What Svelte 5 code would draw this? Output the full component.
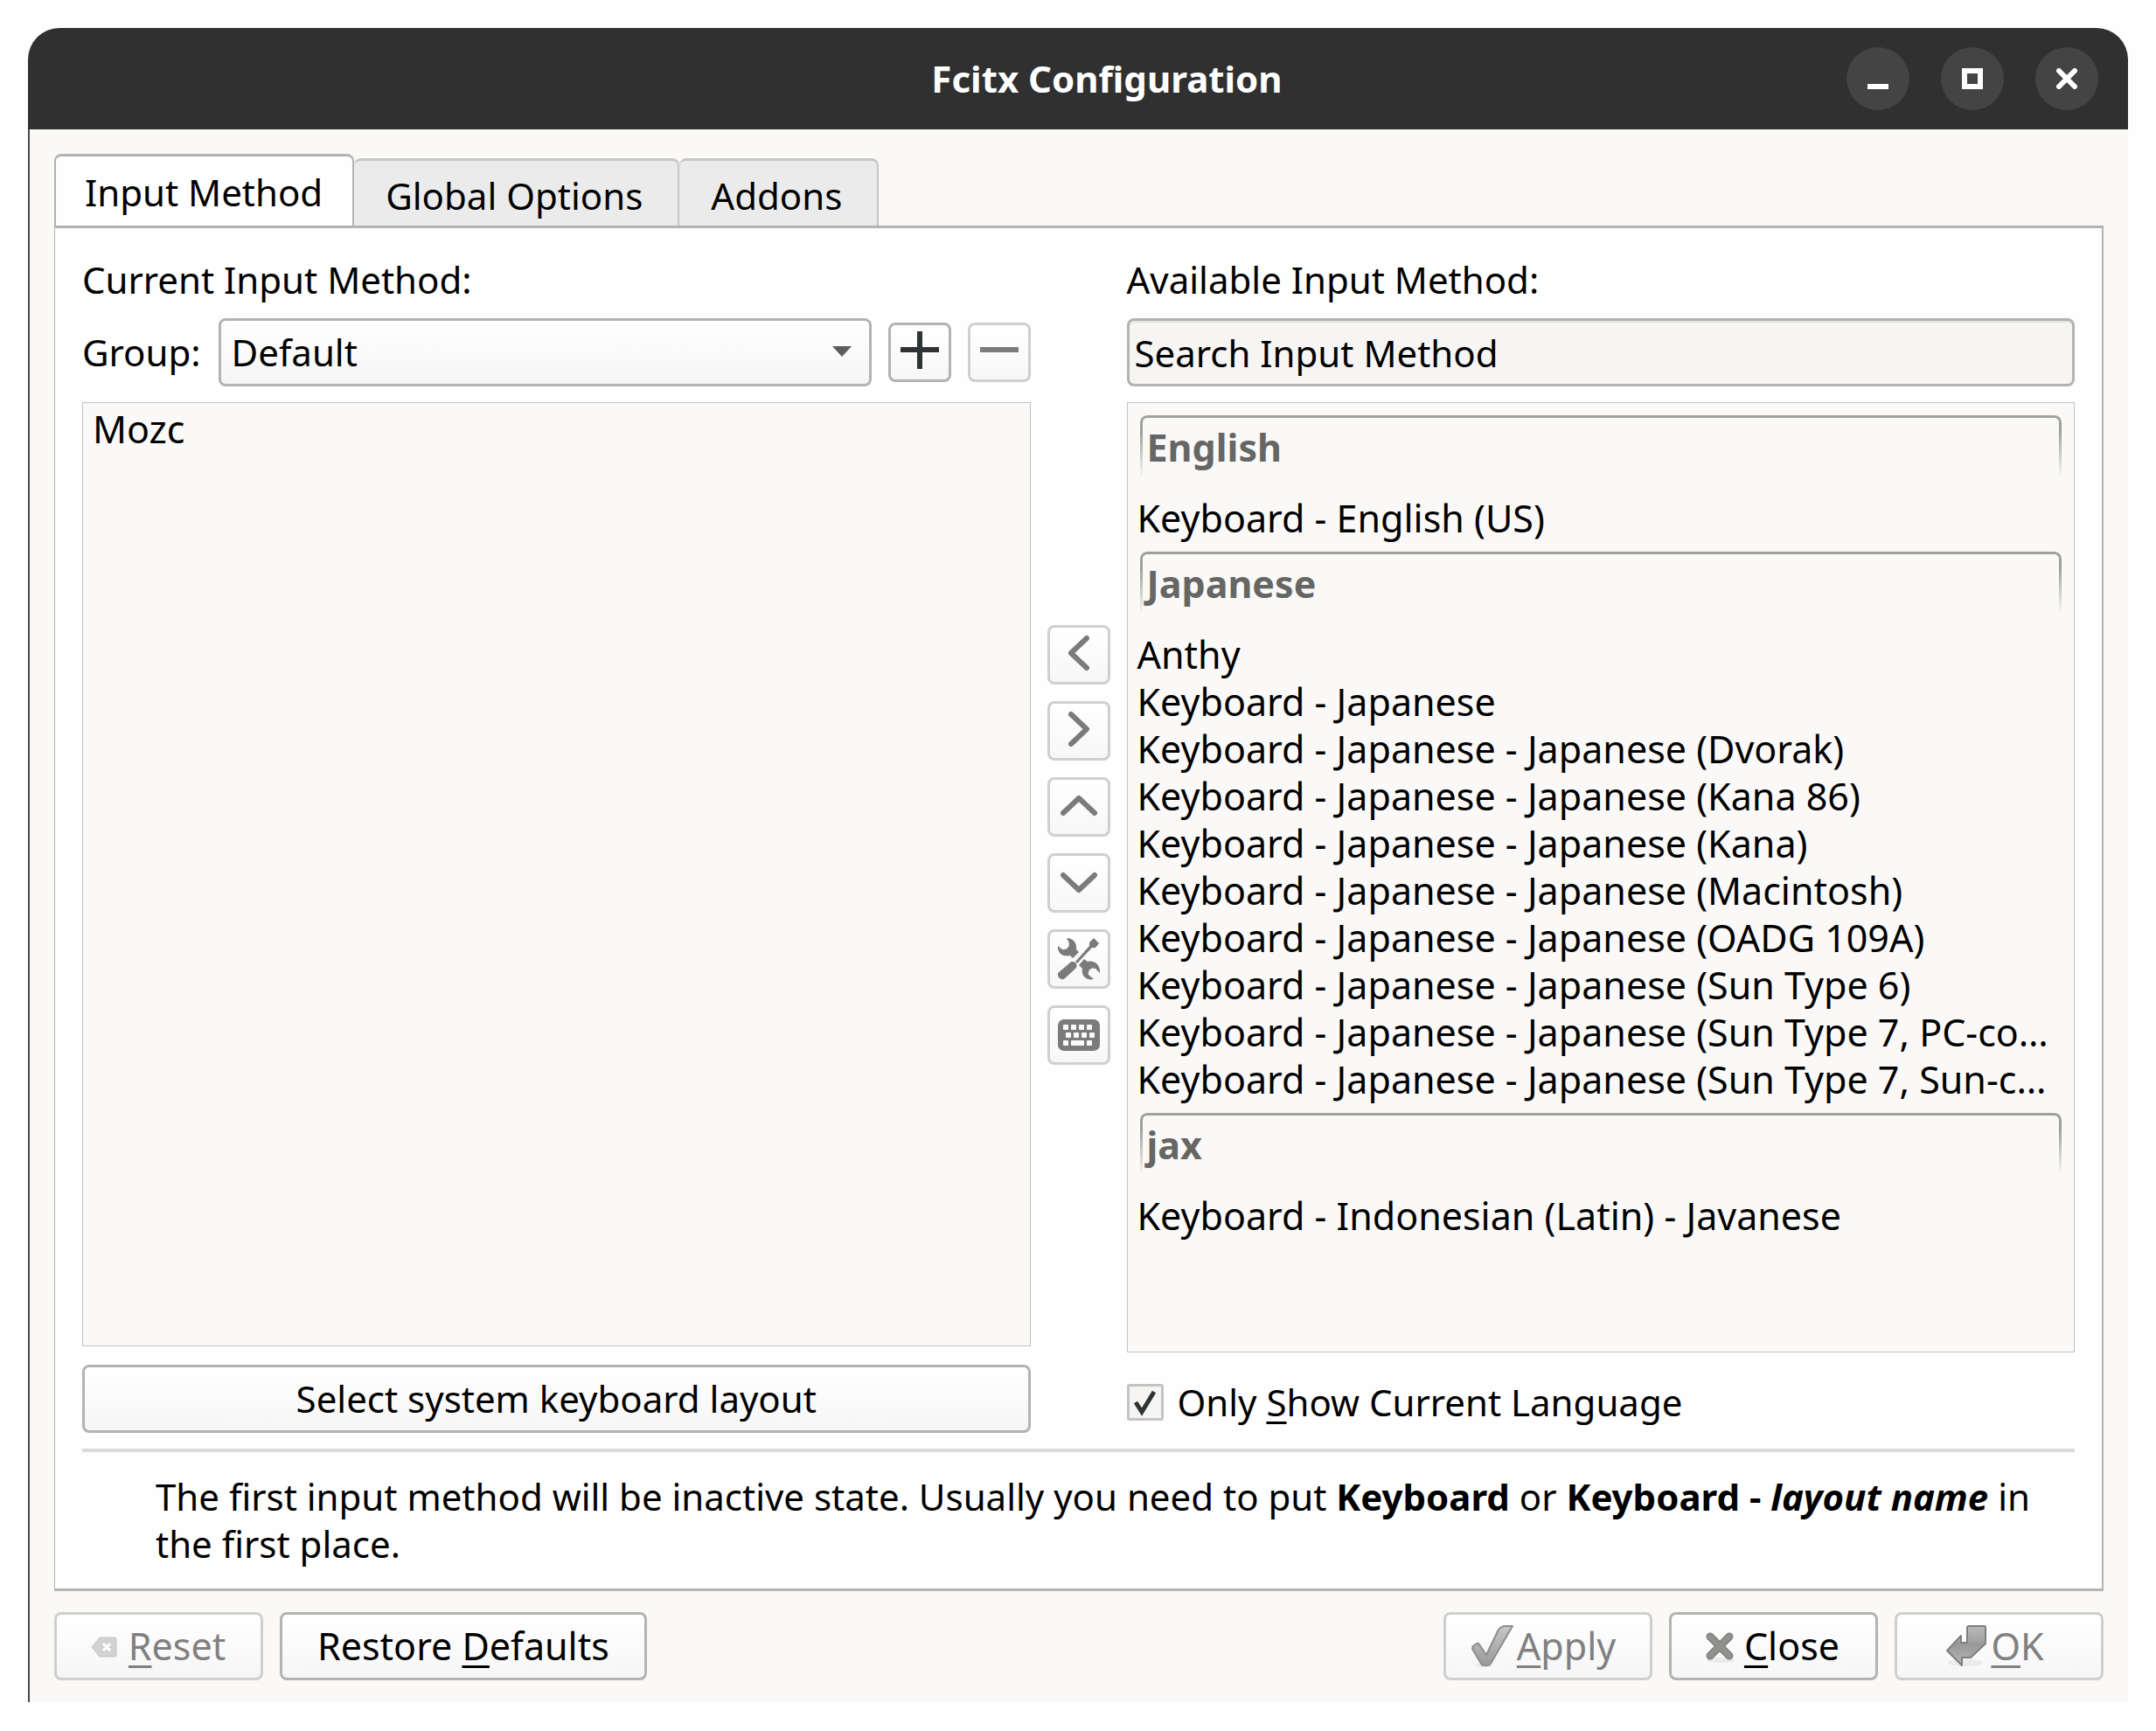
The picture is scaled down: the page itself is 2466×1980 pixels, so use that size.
<script lang="ts">
	const tabs = ['Input Method', 'Global Options', 'Addons'];
	const groups = ['Default'];
	const current = ['Mozc'];

	const available = [
		{ language: 'English', items: ['Keyboard - English (US)'] },
		{
			language: 'Japanese',
			items: [
				'Anthy',
				'Keyboard - Japanese',
				'Keyboard - Japanese - Japanese (Dvorak)',
				'Keyboard - Japanese - Japanese (Kana 86)',
				'Keyboard - Japanese - Japanese (Kana)',
				'Keyboard - Japanese - Japanese (Macintosh)',
				'Keyboard - Japanese - Japanese (OADG 109A)',
				'Keyboard - Japanese - Japanese (Sun Type 6)',
				'Keyboard - Japanese - Japanese (Sun Type 7, PC-co…',
				'Keyboard - Japanese - Japanese (Sun Type 7, Sun-c…'
			]
		},
		{ language: 'jax', items: ['Keyboard - Indonesian (Latin) - Javanese'] }
	];

	const arrows = [
		{ label: 'Remove input method', d: 'M33 5 L15 22 L33 39' },
		{ label: 'Add input method', d: 'M15 5 L33 22 L15 39' },
		{ label: 'Move up', d: 'M6 31 L24 14 L42 31' },
		{ label: 'Move down', d: 'M6 15 L24 32 L42 15' }
	];

	let activeTab = $state(0);
	let group = $state('Default');
	let search = $state('Search Input Method');
	let onlyCurrent = $state(true);
</script>

<main class="desktop">
	<section class="window">
		<header class="titlebar">
			<h1>Fcitx Configuration</h1>
			<button class="win-btn" aria-label="Minimize">
				<svg viewBox="0 0 24 24"><rect x="0" y="18" width="24" height="6" fill="#fff" /></svg>
			</button>
			<button class="win-btn" aria-label="Maximize">
				<svg viewBox="0 0 24 24"><rect x="3" y="3" width="18" height="18" fill="none" stroke="#fff" stroke-width="6" /></svg>
			</button>
			<button class="win-btn" aria-label="Close window">
				<svg viewBox="0 0 24 24"><path d="M3 3 L21 21 M21 3 L3 21" stroke="#fff" stroke-width="6" stroke-linecap="round" /></svg>
			</button>
		</header>

		<div class="body">
			<div class="tabs" role="tablist">
				{#each tabs as tab, i}
					<button class="tab" class:active={activeTab === i} role="tab" aria-selected={activeTab === i} onclick={() => (activeTab = i)}>{tab}</button>
				{/each}
			</div>

			<div class="panel">
				<div class="columns">
					<div class="column">
						<h2>Current Input Method:</h2>
						<div class="row">
							<label for="group">Group:</label>
							<div class="combo">
								<select id="group" bind:value={group}>
									{#each groups as g}
										<option>{g}</option>
									{/each}
								</select>
								<svg class="caret" viewBox="0 0 22 12"><path d="M0 0 H22 L11 12 Z" fill="#5c5c5c" /></svg>
							</div>
							<button class="tool" aria-label="Add group">
								<svg viewBox="0 0 48 48"><path d="M24 0 V43 M2 21 H46" stroke="#2e3436" stroke-width="6" /></svg>
							</button>
							<button class="tool" aria-label="Remove group" disabled>
								<svg viewBox="0 0 48 48"><path d="M2 21 H46" stroke="#7b7b7b" stroke-width="6" /></svg>
							</button>
						</div>
						<ul class="list">
							{#each current as item}
								<li>{item}</li>
							{/each}
						</ul>
						<button class="btn wide">Select system keyboard layout</button>
					</div>

					<div class="mover">
						{#each arrows as arrow}
							<button class="tool" aria-label={arrow.label} disabled>
								<svg viewBox="0 0 48 48"><path d={arrow.d} fill="none" stroke="#7b7b7b" stroke-width="6" stroke-linecap="round" stroke-linejoin="round" /></svg>
							</button>
						{/each}
						<button class="tool" aria-label="Configure" disabled>
							<svg viewBox="0 0 48 48" fill="#7b7b7b">
								<path d="M10 0 C17 0 22 5 21 13 L24 16 L17 23 L14 20 C6 22 -1 17 0 9 L5 13 C9 14 13 11 13 6 Z" />
								<path d="M41 47 C33 49 26 43 28 35 L24 31 L30 24 L34 27 C42 25 49 31 48 40 L43 35 C38 33 34 37 35 42 Z" />
								<path d="M41 0 L47 6 L43 11 L39 11 L22 29 L20 27 L36 9 L36 5 Z" />
								<path d="M13 29 C15 26 18 27 20 28 C22 30 22 33 20 35 L8 46 C5 49 -1 46 0 40 Z" />
							</svg>
						</button>
						<button class="tool" aria-label="Keyboard layout" disabled>
							<svg viewBox="0 0 48 48">
								<rect x="0" y="6" width="48" height="36" rx="7" fill="#7b7b7b" />
								<g fill="#fbfbfb">
									<rect x="6" y="12" width="6" height="6" rx="1" />
									<rect x="15" y="12" width="6" height="6" rx="1" />
									<rect x="24" y="12" width="6" height="6" rx="1" />
									<rect x="33" y="12" width="6" height="6" rx="1" />
									<rect x="9" y="21" width="6" height="6" rx="1" />
									<rect x="18" y="21" width="6" height="6" rx="1" />
									<rect x="27" y="21" width="6" height="6" rx="1" />
									<rect x="36" y="21" width="6" height="6" rx="1" />
									<rect x="6" y="30" width="6" height="6" rx="1" />
									<rect x="15" y="30" width="15" height="6" rx="1" />
									<rect x="33" y="30" width="6" height="6" rx="1" />
								</g>
							</svg>
						</button>
					</div>

					<div class="column">
						<h2><label for="search">Available Input Method:</label></h2>
						<input id="search" class="search" type="text" bind:value={search} />
						<div class="list">
							{#each available as section}
								<h3>{section.language}</h3>
								<ul>
									{#each section.items as item}
										<li>{item}</li>
									{/each}
								</ul>
							{/each}
						</div>
						<label class="check">
							<input type="checkbox" bind:checked={onlyCurrent} />
							<span>Only <u>S</u>how Current Language</span>
						</label>
					</div>
				</div>

				<hr />
				<p class="hint">
					The first input method will be inactive state. Usually you need to put <b>Keyboard</b> or <b>Keyboard - <i>layout name</i></b> in the first place.
				</p>
			</div>

			<footer>
				<button class="btn with-icon" disabled>
					<svg class="icon" viewBox="0 0 48 48">
						<path d="M10 25 L19 14 H36 Q38 14 38 16 V34 Q38 36 36 36 H19 Z" fill="#d2d2d1" stroke="#c4c4c4" stroke-width="1" stroke-linejoin="round" />
						<path d="M23 21 L31 29 M31 21 L23 29" stroke="#fff" stroke-width="3" />
					</svg>
					<span><u>R</u>eset</span>
				</button>
				<button class="btn restore"><span>Restore <u>D</u>efaults</span></button>
				<span class="spacer"></span>
				<button class="btn with-icon" disabled>
					<svg class="icon" viewBox="0 0 48 48">
						<defs>
							<linearGradient id="check-fill" x1="0" y1="0" x2="0" y2="1">
								<stop offset="0" stop-color="#c8c8c8" />
								<stop offset="1" stop-color="#9a9a9a" />
							</linearGradient>
						</defs>
						<ellipse cx="14" cy="46" rx="10" ry="2" fill="#ececec" />
						<path d="M1 27 Q1 24 3 23 L6 21 Q8 20 9 22 L17 34 L31 5 Q33 2 37 1 H47 L22 44 Q21 46 18 46 H14 Q12 46 11 44 Z" fill="url(#check-fill)" stroke="#8e8e8e" stroke-width="2" stroke-linejoin="round" />
					</svg>
					<span><u>A</u>pply</span>
				</button>
				<button class="btn with-icon">
					<svg class="icon" viewBox="0 0 48 48">
						<ellipse cx="25" cy="40" rx="16" ry="3" fill="#eaeaea" />
						<path d="M13 13 L35 35 M35 13 L13 35" stroke="#80827d" stroke-width="9" stroke-linecap="round" />
						<path d="M13 13 L35 35 M35 13 L13 35" stroke="#8f918c" stroke-width="6" stroke-linecap="round" />
					</svg>
					<span><u>C</u>lose</span>
				</button>
				<button class="btn with-icon" disabled>
					<svg class="icon" viewBox="0 0 48 48">
						<defs>
							<linearGradient id="enter-fill" x1="0" y1="0" x2="0" y2="1">
								<stop offset="0" stop-color="#bababa" />
								<stop offset="0.4" stop-color="#a2a2a2" />
								<stop offset="0.45" stop-color="#989898" />
								<stop offset="1" stop-color="#b6b6b6" />
							</linearGradient>
						</defs>
						<ellipse cx="23" cy="43" rx="20" ry="4" fill="#ebebeb" />
						<path d="M27 1 H45 Q46 1 46 2 V21 L29 37 H19 V46 L2 29 L18 12 V20 H25 V3 Q25 1 27 1 Z" fill="url(#enter-fill)" stroke="#7e7e7e" stroke-width="2" stroke-linejoin="round" />
					</svg>
					<span><u>O</u>K</span>
				</button>
			</footer>
		</div>
	</section>
</main>

<style>
	:global(body) {
		background: #fefefe;
	}

	.desktop {
		box-sizing: border-box;
		min-height: 100vh;
		padding: 32px 32px 33px;
		display: flex;
		font: 42px/54px 'Noto Sans', sans-serif;
		color: #000;
	}

	.window {
		flex: 1;
		display: flex;
		flex-direction: column;
		min-width: 0;
	}

	button,
	select,
	input {
		box-sizing: border-box;
		margin: 0;
		font: inherit;
		color: inherit;
	}

	h1,
	h2,
	h3,
	p,
	ul {
		margin: 0;
		padding: 0;
		font-size: inherit;
	}

	h2 {
		font-weight: 400;
	}

	ul {
		list-style: none;
	}

	svg {
		display: block;
	}

	.titlebar {
		display: flex;
		align-items: center;
		gap: 36px;
		padding: 22px 34px;
		background: #303030;
		border-radius: 36px 36px 0 0;
	}

	.titlebar h1 {
		flex: 1;
		padding-left: 390px;
		text-align: center;
		color: #fff;
	}

	.win-btn {
		display: flex;
		align-items: center;
		justify-content: center;
		width: 72px;
		height: 72px;
		padding: 0;
		border: none;
		border-radius: 50%;
		background: #444;
	}

	.win-btn svg {
		width: 24px;
		height: 24px;
	}

	.body {
		flex: 1;
		display: flex;
		flex-direction: column;
		padding: 28px 28px 25px;
		background: #faf9f8;
		border-left: 2px solid #484848;
	}

	.tabs {
		display: flex;
		align-items: flex-end;
		margin-bottom: -3px;
	}

	.tab {
		height: 80px;
		padding: 6px 40px 0 36px;
		border: 3px solid #c6c6c4;
		border-width: 3px 2px 3px 0;
		border-bottom-color: #b3b3b1;
		border-radius: 8px 8px 0 0;
		background: #ebebeb;
	}

	.tab.active {
		height: 85px;
		padding: 0 34px 0 33px;
		border: 3px solid #b3b3b1;
		border-width: 3px 2px 0;
		background: #fefefe;
	}

	.panel {
		flex: 1;
		display: flex;
		flex-direction: column;
		padding: 32px 31px 24px;
		border: 2px solid #b3b3b1;
		border-width: 3px 2px 3px 1px;
		background: #fefefe;
		background-clip: padding-box;
	}

	.columns {
		flex: 1;
		display: flex;
		gap: 19px;
	}

	.column {
		flex: 1 1 0;
		min-width: 0;
		display: flex;
		flex-direction: column;
	}

	.row {
		display: flex;
		align-items: center;
		gap: 19px;
		margin: 17px 0 18px;
	}

	.row label {
		padding-right: 1px;
	}

	.combo {
		position: relative;
		flex: 1;
	}

	.combo select {
		display: block;
		width: 100%;
		height: 78px;
		padding: 0 12px;
		appearance: none;
		border: 3px solid #b3b3b1;
		border-radius: 8px;
		background: linear-gradient(#fff, #f5f5f5);
	}

	.caret {
		position: absolute;
		right: 23px;
		top: 32px;
		width: 22px;
		height: 12px;
		pointer-events: none;
	}

	.tool {
		display: flex;
		align-items: center;
		justify-content: center;
		width: 72px;
		height: 68px;
		padding: 0;
		border: 3px solid #b3b3b1;
		border-radius: 8px;
		background: linear-gradient(#fff, #f7f7f7);
	}

	.tool:disabled {
		border-color: #cfcfcd;
	}

	.tool svg {
		width: 48px;
		height: 48px;
	}

	.mover {
		display: flex;
		flex-direction: column;
		justify-content: center;
		gap: 19px;
	}

	.search {
		width: 100%;
		height: 78px;
		margin: 17px 0 18px;
		padding: 0 6px;
		border: 3px solid #b3b3b1;
		border-radius: 8px;
		background: #f6f5f4;
		box-shadow: inset 0 2px 1px #e4e4e3;
	}

	.list {
		flex: 1;
		padding: 3px 11px;
		overflow: hidden;
		border: 1px solid #c4c4c2;
		background: #faf9f8;
		font-size: 43px;
	}

	.list li {
		white-space: nowrap;
	}

	.list h3 {
		position: relative;
		box-sizing: border-box;
		height: 91px;
		margin: 11px 3px 0;
		padding: 10px 8px 0;
		color: #666664;
	}

	/* frame that fades out below the section title */
	.list h3::before {
		content: '';
		position: absolute;
		inset: 0 0 20px;
		border: 3px solid #a0a09e;
		border-bottom: none;
		border-radius: 8px 8px 0 0;
		mask-image: linear-gradient(#000 20px, transparent);
	}

	.wide {
		margin-top: 21px;
	}

	.check {
		display: flex;
		align-items: center;
		gap: 16px;
		margin: 30px 0 8px;
	}

	.check input {
		width: 42px;
		height: 42px;
		appearance: none;
		border: 3px solid #c4c4c2;
		border-radius: 3px;
		background: #f6f5f4;
	}

	.check input:checked {
		background: #f6f5f4 url("data:image/svg+xml,%3Csvg xmlns='http://www.w3.org/2000/svg' viewBox='0 0 36 36'%3E%3Cpath d='M7 18 L14 29 L28 6' fill='none' stroke='%232e3436' stroke-width='5'/%3E%3C/svg%3E");
	}

	hr {
		width: 100%;
		height: 4px;
		margin: 18px 0 24px;
		border: none;
		background: #dadad9;
	}

	.hint {
		padding-left: 84px;
	}

	footer {
		display: flex;
		gap: 19px;
		margin-top: 24px;
		font-size: 43px;
	}

	.spacer {
		flex: 1;
	}

	.btn {
		display: flex;
		align-items: center;
		justify-content: center;
		gap: 4px;
		min-width: 239px;
		height: 78px;
		padding: 0 20px;
		border: 3px solid #b3b3b1;
		border-radius: 8px;
		background: linear-gradient(#fff, #f6f6f6);
	}

	.btn:disabled {
		border-color: #cfcfcd;
		color: #808080;
	}

	.btn.with-icon {
		padding-right: 30px;
	}

	.btn.restore {
		padding: 0 40px;
	}

	.icon {
		width: 48px;
		height: 48px;
	}

	u {
		text-decoration-thickness: 3px;
		text-underline-offset: 6px;
	}
</style>
